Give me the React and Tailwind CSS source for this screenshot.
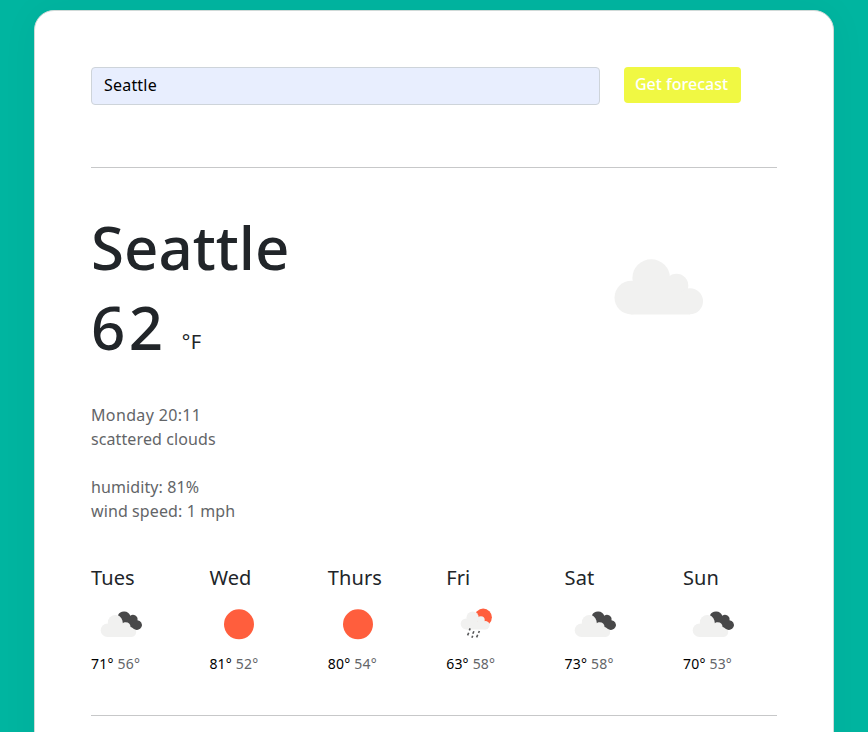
const days = [
  { name: 'Tues', icon: 'clouds', high: 71, low: 56 },
  { name: 'Wed', icon: 'sun', high: 81, low: 52 },
  { name: 'Thurs', icon: 'sun', high: 80, low: 54 },
  { name: 'Fri', icon: 'rain', high: 63, low: 58 },
  { name: 'Sat', icon: 'clouds', high: 73, low: 58 },
  { name: 'Sun', icon: 'clouds', high: 70, low: 53 },
];

// Cloud outline, 89 x 56 units
function CloudShape({ fill = '#f1f1f0', ...rest }) {
  return (
    <g fill={fill} {...rest}>
      <circle cx="17.3" cy="38.6" r="16.8" />
      <circle cx="37.2" cy="19" r="18.8" />
      <circle cx="62.5" cy="26.6" r="11.8" />
      <circle cx="76" cy="42.3" r="13" />
      <path d="M17.3 30H60l16 8v17.4H17.3z" />
    </g>
  );
}

function DayIcon({ kind }) {
  return (
    <svg width="60" height="60" viewBox="0 0 60 60" className="block">
      {kind === 'sun' && <circle cx="30" cy="30.3" r="15" fill="#ff5e3d" />}
      {kind === 'clouds' && (
        <>
          <g fill="#f1f1f0">
            <circle cx="16.5" cy="36.2" r="6.8" />
            <circle cx="24.3" cy="28.6" r="7.5" />
            <path d="M16.5 31l8-4h14l6 8c2 4-.5 8-4 8h-24z" />
          </g>
          <path
            fill="#484849"
            transform="translate(-2.9 -1.9) scale(1.09 1.05)"
            d="M27.4 22a6.1 6.1 0 0 1 11.3.5 4.2 4.2 0 0 1 6.6 4.2 4.7 4.7 0 1 1-3.6 8.3c-.6-1-1.6-1.6-2.7-1.8-.2-2.9-2.2-4.8-5.3-4.4-.7.1-1.2.3-1.8.8-.2-3.7-2-6.2-4.5-7.6z"
          />
        </>
      )}
      {kind === 'rain' && (
        <>
          <circle cx="37.2" cy="23.3" r="8.7" fill="#ff5e3d" />
          <CloudShape transform="translate(14.5 17.4) scale(.326)" />
          <g stroke="#57585a" strokeWidth="1.6">
            <path d="M24.2 34.4l-.9 2M22.7 38.8l-1.1 2.6M27.9 37.2l-1.1 2.6M26.7 41.8l-.8 1.9M33.4 37l-.9 1.9M31.7 40.8l-1.1 2.6" />
          </g>
        </>
      )}
    </svg>
  );
}

export default function App() {
  return (
    <div className="h-[732px] overflow-hidden bg-[#00b5a0] pt-[10px] font-['Noto_Sans',sans-serif] text-[#212529]">
      <main className="mx-auto h-[800px] w-[800px] rounded-[20px] border border-[#d0dad8] bg-white px-14 pt-14 shadow-[0_0_40px_rgba(0,0,0,0.04)]">
        <form className="flex items-start gap-6">
          <input
            type="text"
            defaultValue="Seattle"
            className="h-[38px] w-[509px] rounded-[4px] border border-[#ced4da] bg-[#e8eefe] px-3 pb-0.5 text-base tracking-[0.2px] text-black outline-none"
          />
          <button
            type="button"
            className="h-9 w-[117px] rounded-[4px] bg-[#f0f843] pr-0.5 pb-0.5 text-base font-medium whitespace-nowrap text-white"
          >
            Get forecast
          </button>
        </form>

        <hr className="mt-[62px] border-[#c7c8c9]" />

        <section className="mt-[39px] flex justify-between">
          <div>
            <h1 className="h-20 text-[60px] leading-[80px] font-medium">Seattle</h1>
            <div className="flex h-20 items-baseline gap-[15px]">
              <span className="text-[60px] leading-[80px] font-medium tracking-[3.5px]">62</span>
              <span className="-translate-y-px text-[20px] tracking-[0.5px]">°F</span>
            </div>
          </div>
          <svg width="89" height="56" viewBox="0 0 89 56" className="mt-[52px] mr-[74px]">
            <CloudShape />
          </svg>
        </section>

        <ul className="mt-9 text-base leading-6 tracking-[0.1px] text-[#636568]">
          <li className="tracking-[0.35px]">Monday 20:11</li>
          <li>scattered clouds</li>
          <li className="mt-6">humidity: 81%</li>
          <li>wind speed: 1 mph</li>
        </ul>

        <section className="mt-10 flex">
          {days.map((day) => (
            <div key={day.name} className="w-[118.4px] shrink-0">
              <h2 className="h-[31px] text-[20px] leading-[30px] tracking-[0.1px]">{day.name}</h2>
              <DayIcon kind={day.icon} />
              <p className="text-sm leading-5 tracking-[0.2px] text-[#636568]">
                <span className="text-black">{day.high}°</span> {day.low}°
              </p>
            </div>
          ))}
        </section>

        <hr className="mt-[41px] border-[#c7c8c9]" />
      </main>
    </div>
  );
}
